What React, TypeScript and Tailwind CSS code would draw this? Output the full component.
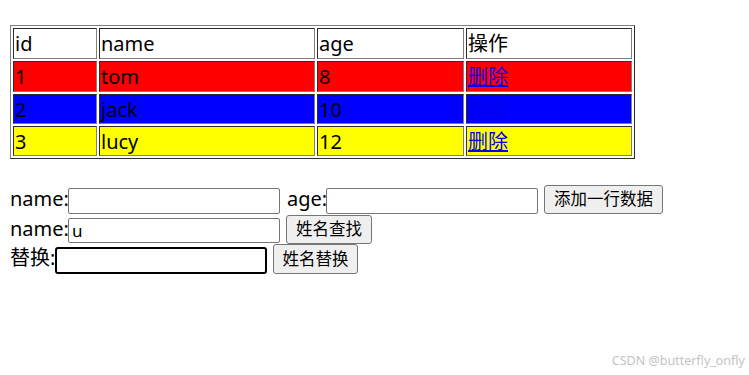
import React from "react";

const rows = [
  { id: "1", name: "tom", age: "8", bg: "bg-[#ff0000]", h: "h-[31px]" },
  { id: "2", name: "jack", age: "10", bg: "bg-[#0000ff]", h: "h-[30px]" },
  { id: "3", name: "lucy", age: "12", bg: "bg-[#ffff00]", h: "h-[30px]" },
];

function Cell({ children, bg, h }: { children?: React.ReactNode; bg: string; h: string }) {
  return (
    <div
      className={`${bg} ${h} border border-[#808080] [border-style:inset] pl-[1px] pt-[1px] leading-[27px] text-[20px] text-black overflow-hidden whitespace-nowrap`}
    >
      {children}
    </div>
  );
}

export default function App() {
  const font = "font-['Noto_Sans','Noto_Sans_CJK_SC',sans-serif]";
  return (
    <div className={`h-[375px] w-full bg-white flex flex-col pl-[10px] pt-[25px] ${font}`}>
      {/* table */}
      <div className="self-start border border-[#808080] [border-style:outset] p-[2px] grid grid-cols-[84px_216px_147px_166px] gap-[2px]">
        <Cell bg="bg-white" h="h-[31px]">id</Cell>
        <Cell bg="bg-white" h="h-[31px]">name</Cell>
        <Cell bg="bg-white" h="h-[31px]">age</Cell>
        <Cell bg="bg-white" h="h-[31px]">操作</Cell>
        {rows.map((r) => (
          <React.Fragment key={r.id}>
            <Cell bg={r.bg} h={r.h}>{r.id}</Cell>
            <Cell bg={r.bg} h={r.h}>{r.name}</Cell>
            <Cell bg={r.bg} h={r.h}>{r.age}</Cell>
            <Cell bg={r.bg} h={r.h}>
              <a href="#" className="text-[#0000ee] underline">删除</a>
            </Cell>
          </React.Fragment>
        ))}
      </div>

      {/* forms */}
      <div className="mt-[26px] flex flex-col text-[20px] text-black">
        <div className="flex items-start h-[29px]">
          <span className="w-[58px] leading-[27px] h-[27px] whitespace-nowrap">name:</span>
          <input
            className="mt-[3px] w-[212px] h-[26px] border border-[#767676] rounded-[2px] bg-white px-[3px] text-[16px] outline-none"
            defaultValue=""
          />
          <span className="ml-[7px] w-[39px] leading-[27px] h-[27px] whitespace-nowrap">age:</span>
          <input
            className="mt-[3px] w-[212px] h-[26px] border border-[#767676] rounded-[2px] bg-white px-[3px] text-[16px] outline-none"
            defaultValue=""
          />
          <button className="ml-[6px] w-[119px] h-[29px] border border-[#767676] rounded-[3px] bg-[#efefef] text-[16.5px] leading-none flex items-center justify-center">
            添加一行数据
          </button>
        </div>
        <div className="flex items-start h-[29px] mt-[1px]">
          <span className="w-[58px] leading-[27px] h-[27px] whitespace-nowrap">name:</span>
          <input
            className="mt-[3px] w-[212px] h-[25px] border border-[#767676] rounded-[2px] bg-white px-[3px] text-[17px] leading-none text-black outline-none"
            defaultValue="u"
          />
          <button className="ml-[6px] w-[86px] h-[29px] border border-[#767676] rounded-[3px] bg-[#efefef] text-[16.5px] leading-none flex items-center justify-center">
            姓名查找
          </button>
        </div>
        <div className="flex items-start h-[30px]">
          <span className="w-[45px] leading-[27px] h-[27px] whitespace-nowrap">替换:</span>
          <input
            className="mt-[3px] w-[212px] h-[27px] border-2 border-black rounded-[3px] bg-white px-[2px] text-[16px] outline-none"
            defaultValue=""
          />
          <button className="ml-[6px] w-[85px] h-[30px] border border-[#767676] rounded-[3px] bg-[#efefef] text-[16.5px] leading-none flex items-center justify-center">
            姓名替换
          </button>
        </div>
      </div>

      <div className="mt-auto self-end pr-[4px] pb-[6px] text-[12.5px] leading-[16px] text-[#c4c4c4] font-['Noto_Sans',sans-serif]">
        CSDN @butterfly_onfly
      </div>
    </div>
  );
}
